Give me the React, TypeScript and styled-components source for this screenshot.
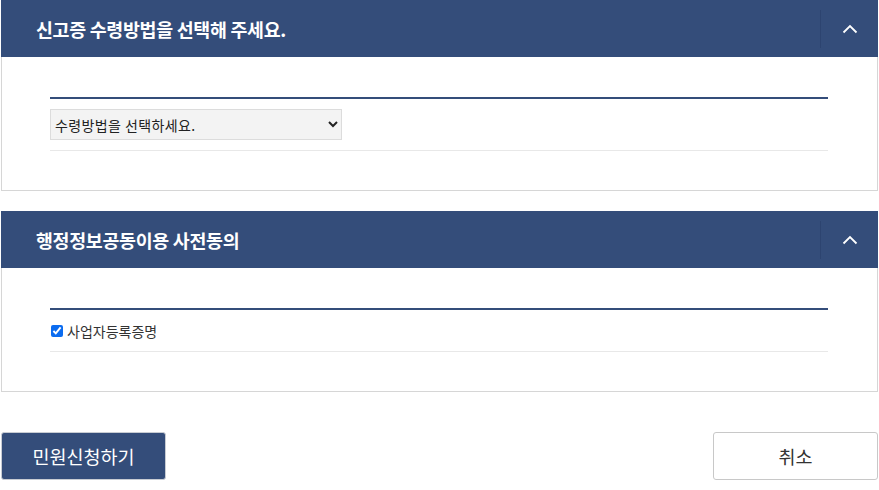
import React from "react";
import styled, { createGlobalStyle } from "styled-components";

const NAVY = "#344d7a";

const GlobalStyle = createGlobalStyle`
  body {
    margin: 0;
    background: #fff;
    font-family: "Noto Sans CJK KR", "Noto Sans", sans-serif;
  }
`;

const Page = styled.div`
  padding: 0 1px 0 1px;
  width: 877px;
`;

const Panel = styled.section`
  margin-bottom: 20px;
`;

const PanelHeader = styled.div`
  height: 57px;
  background: ${NAVY};
  display: flex;
  align-items: center;
  box-sizing: border-box;
`;

const PanelTitle = styled.h2`
  flex: 1;
  margin: 0;
  padding-left: 35px;
  color: #fff;
  font-size: 18.4px;
  font-weight: 700;
  letter-spacing: -0.3px;
`;

const ToggleButton = styled.button`
  width: 58px;
  height: 38px;
  border: 0;
  border-left: 1px solid #2d4470;
  background: transparent;
  display: flex;
  align-items: center;
  justify-content: center;
  padding: 0;
  cursor: pointer;
`;

const PanelBody = styled.div`
  border: 1px solid #d6d6d6;
  border-top: 0;
  padding: 40px 49px 39px 48px;
`;

const FieldTable = styled.div`
  border-top: 2px solid ${NAVY};
`;

const FieldRow = styled.div<{ $pad: number }>`
  padding: ${(p) => p.$pad}px 0;
  border-bottom: 1px solid #e8e8e8;
  display: flex;
  align-items: center;
`;

const Select = styled.select`
  width: 292px;
  height: 31px;
  background: #f3f3f3;
  border: 1px solid #dcdcdc;
  font-family: "Noto Sans CJK KR", sans-serif;
  font-size: 14px;
  letter-spacing: 0.4px;
  color: #222;
  padding: 0;
`;

const CheckLabel = styled.label`
  display: flex;
  align-items: center;
  font-size: 14px;
  color: #333;
  height: 21px;
  input {
    margin: 0 4px 0 1px;
    width: 12px;
    height: 12px;
    accent-color: #0b6cf0;
  }
`;

const Actions = styled.div`
  display: flex;
  justify-content: space-between;
  padding-top: 20px;
`;

const Button = styled.button<{ $primary?: boolean }>`
  height: 48px;
  width: 165px;
  border-radius: 3px;
  font-family: "Noto Sans CJK KR", sans-serif;
  font-size: 18.5px;
  cursor: pointer;
  background: ${(p) => (p.$primary ? NAVY : "#fff")};
  color: ${(p) => (p.$primary ? "#fff" : "#333")};
  border: 1px solid ${(p) => (p.$primary ? "#c8ccd3" : "#c8c8c8")};
`;

const ChevronUp = () => (
  <svg width="16" height="10" viewBox="0 0 16 10">
    <path d="M1.5 8.5 L8 2 L14.5 8.5" fill="none" stroke="#fff" strokeWidth="1.8" />
  </svg>
);

const App = () => {
  return (
    <>
      <GlobalStyle />
      <Page>
        <Panel>
          <PanelHeader>
            <PanelTitle>신고증 수령방법을 선택해 주세요.</PanelTitle>
            <ToggleButton aria-label="접기">
              <ChevronUp />
            </ToggleButton>
          </PanelHeader>
          <PanelBody>
            <FieldTable>
              <FieldRow $pad={10}>
                <Select defaultValue="">
                  <option value="">수령방법을 선택하세요.</option>
                </Select>
              </FieldRow>
            </FieldTable>
          </PanelBody>
        </Panel>
        <Panel>
          <PanelHeader>
            <PanelTitle>행정정보공동이용 사전동의</PanelTitle>
            <ToggleButton aria-label="접기">
              <ChevronUp />
            </ToggleButton>
          </PanelHeader>
          <PanelBody>
            <FieldTable>
              <FieldRow $pad={10}>
                <CheckLabel>
                  <input type="checkbox" defaultChecked />
                  사업자등록증명
                </CheckLabel>
              </FieldRow>
            </FieldTable>
          </PanelBody>
        </Panel>
        <Actions>
          <Button $primary>민원신청하기</Button>
          <Button>취소</Button>
        </Actions>
      </Page>
    </>
  );
};

export default App;
